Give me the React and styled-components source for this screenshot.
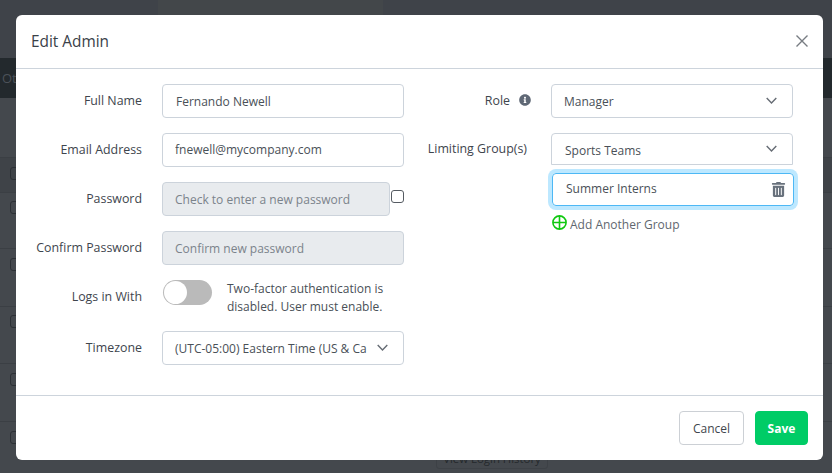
import React from "react";
import styled, { createGlobalStyle } from "styled-components";
import { FaInfoCircle, FaTrashAlt } from "react-icons/fa";

const Global = createGlobalStyle`
  html, body { margin: 0; padding: 0; }
  body { font-family: "Open Sans", "Noto Sans", sans-serif; }
`;

const Page = styled.div`
  position: relative;
  width: 832px;
  height: 473px;
  overflow: hidden;
  background: #44484d;
  font-family: "Open Sans", "Noto Sans", sans-serif;
`;
const TopStrip = styled.div`
  height: 58px;
  background: #3f4349;
  padding-left: 158px;
`;
const TopPanel = styled.div`
  width: 225px;
  height: 58px;
  background: #43474a;
`;
const HeadBar = styled.div`
  height: 40px;
  background: #23292d;
  color: #4c5259;
  font-size: 13px;
  line-height: 40px;
  padding-left: 2px;
  margin-bottom: 59px;
`;
const BackRow = styled.div`
  height: ${(p) => p.$h}px;
  box-sizing: border-box;
  border-top: 1px solid #3b3f44;
  background: ${(p) => (p.$shade ? "#3f4348" : "transparent")};
  padding: ${(p) => p.$pad}px 0 0 10px;
`;
const BackCheck = styled.div`
  width: 13px;
  height: 13px;
  box-sizing: border-box;
  border: 1px solid #2c3035;
  border-radius: 3px;
`;
const BackButton = styled.div`
  margin: 5px 0 0 426px;
  width: 112px;
  height: 20px;
  box-sizing: border-box;
  border: 1px solid #3d4146;
  border-radius: 3px;
  color: #24282c;
  font-size: 11.4px;
  line-height: 18px;
  text-align: center;
  white-space: nowrap;
`;
const Modal = styled.div`
  position: absolute;
  left: 16px;
  top: 15px;
  width: 807px;
  height: 445px;
  background: #fff;
  border-radius: 6px;
  display: flex;
  flex-direction: column;
`;
const Header = styled.div`
  height: 54px;
  box-sizing: border-box;
  border-bottom: 1px solid #cdd4dc;
  display: flex;
  align-items: center;
  justify-content: space-between;
  padding: 0 15px;
`;
const Title = styled.h2`
  margin: 0;
  font-size: 15.4px;
  font-weight: 400;
  color: #3a4148;
`;
const CloseButton = styled.button`
  border: 0;
  background: none;
  padding: 0;
  width: 12px;
  height: 12px;
  display: flex;
  margin-top: -1px;
`;
const Body = styled.div`
  flex: 1;
  display: grid;
  grid-template-columns: 388px 389px;
  column-gap: 16px;
  padding-top: 15px;
  align-items: start;
`;
const Column = styled.div`
  display: flex;
  flex-direction: column;
`;
const Row = styled.div`
  display: grid;
  grid-template-columns: ${(p) => p.$label}px 242px;
  column-gap: 20px;
  align-items: ${(p) => p.$align || "center"};
  margin-bottom: 15px;
`;
const Label = styled.label`
  display: flex;
  align-items: center;
  justify-content: flex-end;
  gap: 9px;
  font-size: 12.4px;
  color: #3e454d;
  padding-right: ${(p) => p.$pr || 0}px;
  position: relative;
  top: ${(p) => p.$top || -1}px;
  white-space: nowrap;
`;
const Field = styled.div`
  height: 34px;
  box-sizing: border-box;
  border: 1px solid #ccd3db;
  border-radius: 4px;
  display: flex;
  align-items: center;
  justify-content: space-between;
  padding: 0 15px 0 ${(p) => p.$pl || 12}px;
  font-size: 12px;
  color: ${(p) => (p.$muted ? "#7b838b" : "#495057")};
  background: ${(p) => (p.$muted ? "#e8ebee" : "#fff")};
  ${(p) => (p.$open ? "border-bottom-left-radius: 0; border-bottom-right-radius: 0; height: 32px;" : "")}
  ${(p) => (p.$grow ? "flex: 1;" : "")}
  white-space: nowrap;
  overflow: hidden;
`;
const FieldText = styled.span`
  position: relative;
  top: ${(p) => p.$top || 0}px;
  overflow: hidden;
`;
const PasswordRow = styled.div`
  display: flex;
  align-items: center;
`;
const Check = styled.span`
  width: 13px;
  height: 13px;
  margin-left: 1px;
  box-sizing: border-box;
  border: 1px solid #555b62;
  border-radius: 3px;
  background: #fff;
  margin-top: -5px;
  flex: none;
`;
const ToggleWrap = styled.div`
  display: flex;
  align-items: flex-start;
  gap: 15px;
  padding-left: 1px;
`;
const Toggle = styled.div`
  width: 49px;
  height: 25px;
  flex: none;
  border-radius: 13px;
  background: #bababa;
  box-sizing: border-box;
  padding: 1px;
`;
const Knob = styled.div`
  width: 23px;
  height: 23px;
  border-radius: 50%;
  background: #fff;
`;
const Help = styled.div`
  font-size: 12px;
  line-height: 18px;
  color: #495057;
  white-space: nowrap;
`;
const GroupStack = styled.div`
  display: flex;
  flex-direction: column;
`;
const FocusField = styled.div`
  width: 242px;
  height: 33px;
  margin: 8px 0 0 1px;
  box-sizing: border-box;
  border: 1px solid #4db8f5;
  border-radius: 4px;
  box-shadow: 0 0 0 4px #bde8ff;
  display: flex;
  align-items: center;
  justify-content: space-between;
  padding: 0 7px 0 13px;
  font-size: 12px;
  color: #495057;
`;
const FocusText = styled.span`
  position: relative;
  top: -1px;
`;
const AddLink = styled.div`
  display: flex;
  align-items: center;
  gap: 3px;
  margin: 8px 0 0 1px;
  font-size: 12px;
  color: #5f676f;
`;
const AddText = styled.span`
  position: relative;
  top: 2px;
`;
const Footer = styled.div`
  height: 65px;
  box-sizing: border-box;
  border-top: 1px solid #cdd4dc;
  display: flex;
  justify-content: flex-end;
  align-items: flex-start;
  gap: 11px;
  padding: 15px 15px 0 0;
`;
const Button = styled.button`
  height: 34px;
  box-sizing: border-box;
  width: ${(p) => p.$w}px;
  border-radius: 4px;
  padding: 0;
  font-family: inherit;
  font-size: 12px;
  font-weight: ${(p) => (p.$primary ? 700 : 400)};
  color: ${(p) => (p.$primary ? "#fff" : "#3f464e")};
  background: ${(p) => (p.$primary ? "#00cc66" : "#fff")};
  border: 1px solid ${(p) => (p.$primary ? "#00cc66" : "#ccd0d5")};
`;

const Chevron = () => (
  <svg width="11" height="8" viewBox="0 0 11 8" fill="none" stroke="#666c74" strokeWidth="1.4">
    <path d="M.7 1l4.8 5L10.3 1" />
  </svg>
);
const CloseIcon = () => (
  <svg width="12" height="12" viewBox="0 0 12 12" stroke="#777c82" strokeWidth="1.4" fill="none">
    <path d="M.5.5l11 11M11.5.5l-11 11" />
  </svg>
);
const PlusIcon = () => (
  <svg width="15" height="15" viewBox="0 0 15 15" fill="none" stroke="#10c810" strokeWidth="1.6">
    <circle cx="7.5" cy="7.5" r="6.6" />
    <path d="M1 7.5h13M7.5 1v13" />
  </svg>
);

export default function App() {
  return (
    <Page>
      <Global />
      <TopStrip><TopPanel /></TopStrip>
      <HeadBar>Ot</HeadBar>
      <BackRow $h={35} $pad={9} $shade><BackCheck /></BackRow>
      <BackRow $h={56} $pad={8}><BackCheck /></BackRow>
      <BackRow $h={58} $pad={9}><BackCheck /></BackRow>
      <BackRow $h={57} $pad={8}><BackCheck /></BackRow>
      <BackRow $h={58} $pad={9}><BackCheck /></BackRow>
      <BackRow $h={52} $pad={9}>
        <BackCheck />
        <BackButton>View Login History</BackButton>
      </BackRow>

      <Modal>
        <Header>
          <Title>Edit Admin</Title>
          <CloseButton aria-label="Close"><CloseIcon /></CloseButton>
        </Header>
        <Body>
          <Column>
            <Row $label={126}>
              <Label>Full Name</Label>
              <Field $pl={13}><FieldText>Fernando Newell</FieldText></Field>
            </Row>
            <Row $label={126}>
              <Label>Email Address</Label>
              <Field><FieldText $top={-1}>fnewell@mycompany.com</FieldText></Field>
            </Row>
            <Row $label={126}>
              <Label>Password</Label>
              <PasswordRow>
                <Field $muted $grow>Check to enter a new password</Field>
                <Check />
              </PasswordRow>
            </Row>
            <Row $label={126}>
              <Label>Confirm Password</Label>
              <Field $muted>Confirm new password</Field>
            </Row>
            <Row $label={126} $align="start">
              <Label $top={8}>Logs in With</Label>
              <ToggleWrap>
                <Toggle><Knob /></Toggle>
                <Help>
                  Two-factor authentication is
                  <br />
                  disabled. User must enable.
                </Help>
              </ToggleWrap>
            </Row>
            <Row $label={126}>
              <Label>Timezone</Label>
              <Field>
                <FieldText>(UTC-05:00) Eastern Time (US &amp; Ca</FieldText>
                <Chevron />
              </Field>
            </Row>
          </Column>
          <Column>
            <Row $label={111}>
              <Label>
                Role
                <FaInfoCircle size={12} color="#5f6875" />
              </Label>
              <Field><FieldText>Manager</FieldText><Chevron /></Field>
            </Row>
            <Row $label={111} $align="start">
              <Label $pr={4} $top={7}>Limiting Group(s)</Label>
              <GroupStack>
                <Field $open $pl={13}><FieldText $top={1}>Sports Teams</FieldText><Chevron /></Field>
                <FocusField>
                  <FocusText>Summer Interns</FocusText>
                  <FaTrashAlt size={15} color="#68717c" />
                </FocusField>
                <AddLink><PlusIcon /><AddText>Add Another Group</AddText></AddLink>
              </GroupStack>
            </Row>
          </Column>
        </Body>
        <Footer>
          <Button $w={65}>Cancel</Button>
          <Button $w={53} $primary>Save</Button>
        </Footer>
      </Modal>
    </Page>
  );
}
